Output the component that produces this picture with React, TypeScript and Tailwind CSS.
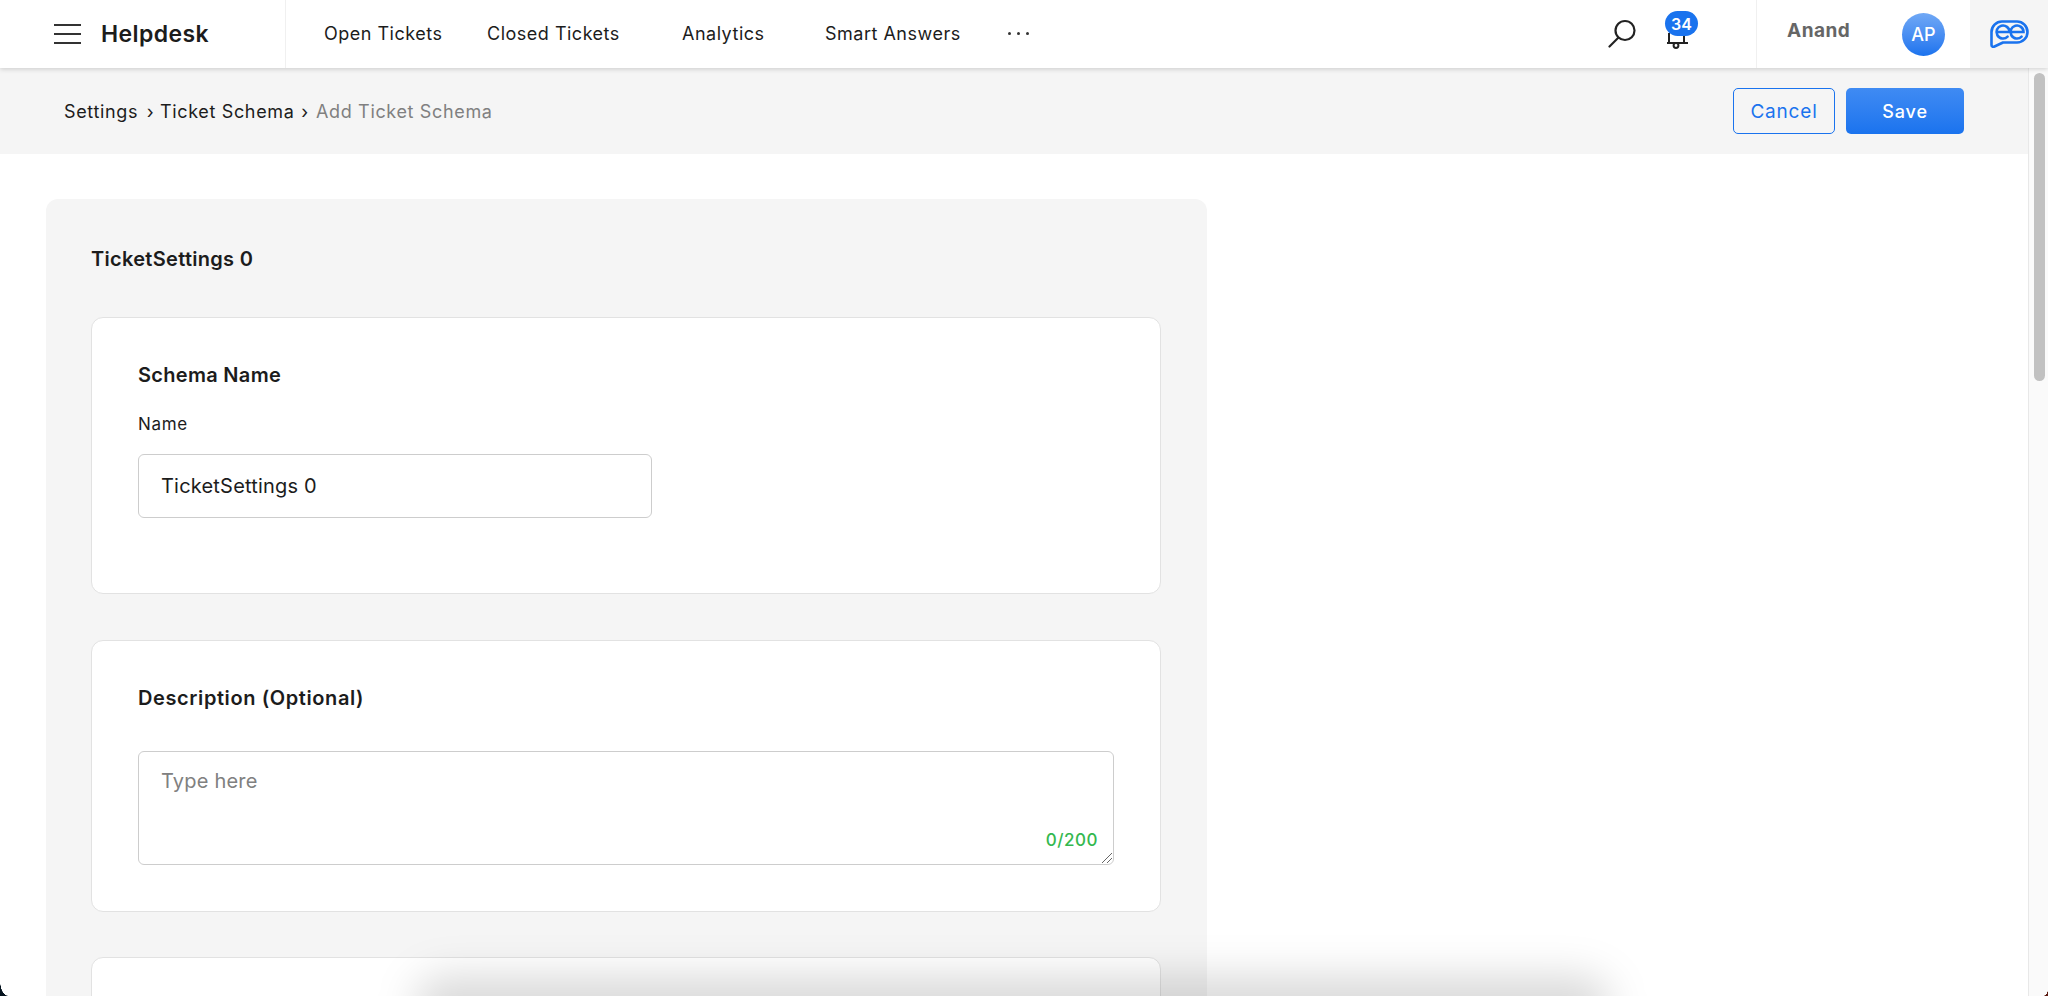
const navItems = [
  { title: "Open Tickets", className: "w-[201px] pl-[38px]" },
  { title: "Closed Tickets", className: "w-[195px]" },
  { title: "Analytics", className: "w-[143px]" },
  { title: "Smart Answers", className: "w-[183px]" },
];

function EeLogo() {
  return (
    <svg width="39" height="28" viewBox="0 0 39 28" fill="none" stroke="#1a73ee" strokeWidth="2.6">
      <path d="M12 1.5h15a10.5 10.5 0 0 1 0 21H13l-8.5 4c-1.500.6-3 0-3-1.500V12A10.500 10.500 0 0 1 12 1.500z" strokeLinejoin="round" />
      <path d="M6.500 12h13a6.500 6.500 0 1 0-1.900 4.600M20.500 12h13a6.500 6.500 0 1 0-1.900 4.600" strokeLinecap="round" />
    </svg>
  );
}

export default function App() {
  return (
    <div className="relative h-[996px] w-[2048px] overflow-hidden bg-white text-[#1c1c1c] font-['Inter','Liberation_Sans',sans-serif]">
      {/* Header */}
      <header className="relative z-10 flex h-[68px] items-stretch bg-white shadow-[0_1px_5px_rgba(0,0,0,0.18)]">
        <div className="flex w-[286px] items-center border-r border-[#f0f0f0] pl-[54px]">
          <div className="flex w-[27px] flex-col gap-[7px]">
            <span className="h-[2px] bg-[#333]" />
            <span className="h-[2px] bg-[#333]" />
            <span className="h-[2px] bg-[#333]" />
          </div>
          <span className="ml-[20px] text-[23px] font-semibold tracking-[0.4px]">Helpdesk</span>
        </div>
        <nav className="flex items-center pb-[1px] text-[18px] tracking-[0.5px]">
          {navItems.map((item) => (
            <a key={item.title} className={item.className}>
              {item.title}
            </a>
          ))}
          <span className="flex gap-[6px]">
            <span className="h-[3px] w-[3px] rounded-full bg-[#333]" />
            <span className="h-[3px] w-[3px] rounded-full bg-[#333]" />
            <span className="h-[3px] w-[3px] rounded-full bg-[#333]" />
          </span>
        </nav>
        <div className="ml-auto flex items-stretch">
          <div className="flex w-[148px] items-start pt-[19px]">
            <svg width="28" height="29" viewBox="0 0 28 29" fill="none" stroke="#222" strokeWidth="2.2">
              <circle cx="17" cy="11.500" r="9.500" />
              <path d="M10 19 1.500 27.500" strokeLinecap="round" />
            </svg>
            <div className="relative ml-[30px]">
              <svg width="24" height="36" viewBox="0 0 24 36" fill="none" stroke="#222" strokeWidth="2">
                <path d="M3 24v-10M18 24v-10M1 24h21" />
                <circle cx="10" cy="26.500" r="2.400" />
              </svg>
              <span className="absolute -top-[8px] -left-[1px] flex h-[25px] w-[33px] items-center justify-center rounded-full bg-[#1a73ee] text-[16px] font-semibold text-white">
                34
              </span>
            </div>
          </div>
          <div className="flex w-[214px] border-l border-[#f0f0f0]">
            <span className="ml-[30px] mt-[17px] text-[19px] font-bold tracking-[0.5px] text-[#666]">Anand</span>
            <span className="ml-auto mr-[25px] mt-[13px] flex h-[43px] w-[43px] items-center justify-center rounded-full bg-gradient-to-b from-[#70a8f5] to-[#1a73ee] text-[18px] font-medium text-white">
              AP
            </span>
          </div>
          <div className="flex w-[78px] items-center justify-center bg-[#f5f5f5]">
            <EeLogo />
          </div>
        </div>
      </header>

      <div className="flex h-[928px]">
        <div className="w-[2028px] overflow-hidden">
          {/* Breadcrumb */}
          <div className="flex h-[86px] items-center bg-[#f5f5f5] pl-[64px] pr-[64px] text-[18px] tracking-[0.65px]">
            <span className="w-[96px]">Settings <span className="ml-[3px]">›</span></span>
            <span className="w-[156px]">Ticket Schema <span className="ml-[1px]">›</span></span>
            <span className="text-[#808080]">Add Ticket Schema</span>
            <button className="ml-auto h-[46px] w-[102px] rounded-[5px] border border-[#1a73ee] pt-[2px] text-[19px] tracking-[0.8px] text-[#1a73ee]">
              Cancel
            </button>
            <button className="ml-[11px] h-[46px] w-[118px] rounded-[5px] bg-gradient-to-b from-[#3f8bf3] to-[#1a73ee] font-medium tracking-[0.9px] text-white">
              Save
            </button>
          </div>

          {/* Form */}
          <div className="ml-[46px] mt-[45px] h-[900px] w-[1161px] rounded-t-[12px] bg-[#f5f5f5] pl-[45px] pr-[46px] pt-[46px]">
            <h1 className="text-[20px] font-semibold leading-[28px] tracking-[0.3px]">TicketSettings 0</h1>
            <section className="mt-[44px] h-[277px] rounded-[12px] border border-[#e2e2e2] bg-white pl-[46px] pt-[43px]">
              <h2 className="text-[20px] font-semibold leading-[28px] tracking-[0.3px]">Schema Name</h2>
              <label className="mt-[24px] block text-[17px] leading-[22px] tracking-[0.7px]">Name</label>
              <div className="mt-[19px] flex h-[64px] w-[514px] items-center rounded-[6px] border border-[#cdcdcd] pl-[22px] text-[20px] tracking-[0.2px]">
                TicketSettings 0
              </div>
            </section>
            <section className="mt-[46px] h-[272px] rounded-[12px] border border-[#e2e2e2] bg-white pl-[46px] pr-[46px] pt-[43px]">
              <h2 className="text-[20px] font-semibold leading-[28px] tracking-[0.6px]">Description (Optional)</h2>
              <div className="relative mt-[39px] h-[114px] rounded-[6px] border border-[#cdcdcd] pl-[22px] pt-[14px] text-[20px] tracking-[0.2px] text-[#808080]">
                Type here
                <span className="absolute bottom-[11px] right-[15px] text-[17px] font-medium tracking-[0.5px] text-[#34b84f]">0/200</span>
                <svg width="11" height="11" viewBox="0 0 11 11" className="absolute bottom-[1px] right-[1px]" stroke="#666" strokeWidth="1">
                  <path d="M1 11 11 1M6 11l5-5" />
                </svg>
              </div>
            </section>
            <section className="mt-[45px] h-[200px] rounded-[12px] border border-[#e2e2e2] bg-white" />
          </div>
        </div>

        {/* Scrollbar */}
        <div className="w-[20px] border-l border-[#e8e8e8] bg-[#fafafa] pl-[5px] pt-[5px]">
          <div className="h-[308px] w-[11px] rounded-full bg-[#c1c1c1]" />
        </div>
      </div>

      {/* Window shadow along the bottom edge */}
      <div className="pointer-events-none absolute -bottom-[40px] left-[415px] h-[60px] w-[1195px] rounded-[30px] bg-black/15 blur-[20px]" />

      {/* Window corners showing the wallpaper */}
      <div className="absolute bottom-0 left-0 h-[15px] w-[8px] bg-[radial-gradient(ellipse_8px_15px_at_100%_0%,transparent_96%,#06141f_100%)]" />
      <div className="absolute bottom-0 right-0 h-[7px] w-[5px] bg-[radial-gradient(ellipse_5px_7px_at_0%_0%,transparent_96%,#5a1a10_100%)]" />
    </div>
  );
}
